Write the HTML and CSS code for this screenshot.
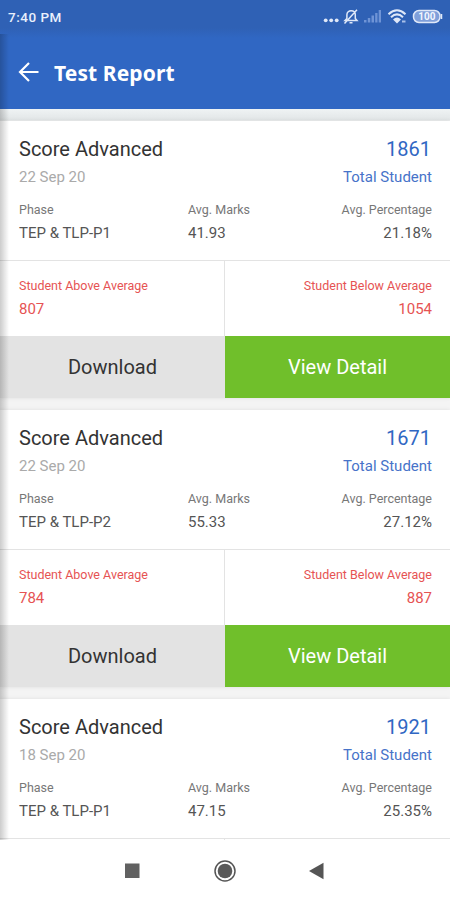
FILE: index.html
```
<!DOCTYPE html>
<html lang="en">
<head>
    <meta charset="UTF-8">
    <title>Test Report</title>
    <link rel="stylesheet" href="styles.css">
</head>
<body>
<div id="screen">
    <div id="header">
        <div class="status">
            <span class="time">7:40 PM</span>
            <svg class="status-icons" width="122" height="18" viewBox="0 0 122 18">
                <g fill="#dfe8f8">
                    <circle cx="3.700" cy="12.300" r="1.900"/>
                    <circle cx="9.200" cy="12.300" r="1.900"/>
                    <circle cx="14.700" cy="12.300" r="1.900"/>
                </g>
                <g fill="none" stroke="#dfe8f8" stroke-width="1.500">
                    <path d="M23 12.500h12l-1.700-2V6.800c0-5.500-8.400-5.500-8.400 0v3.700zM27.500 14.700h3M22.500 15.500L35 1.800"/>
                </g>
                <g fill="#6f94d6">
                    <rect x="42" y="12" width="2.500" height="2.500"/>
                    <rect x="45.800" y="10" width="2.500" height="4.500"/>
                    <rect x="49.500" y="7.500" width="2.500" height="7"/>
                    <rect x="53.200" y="5" width="2.300" height="9.500"/>
                    <rect x="56.700" y="2" width="2.300" height="12.500"/>
                </g>
                <g fill="none" stroke="#dfe8f8" stroke-width="2">
                    <path d="M66.500 6.200Q75 -1.600 83.500 6.200M69 9.200Q75 3.600 81 9.200"/>
                    <path d="M71 11.400Q75 7.600 79 11.400L75 15.500z" fill="#dfe8f8" stroke="none"/>
                    <path d="M80 13.500h3.500" stroke="#a9c0e8"/>
                </g>
                <rect x="91.500" y="2.500" width="26.500" height="12" rx="5.500" fill="#7f9fda" stroke="#dfe8f8" stroke-width="1.500"/>
                <path d="M119.500 6v5" stroke="#dfe8f8" stroke-width="1.500"/>
                <text class="battery" x="104.800" y="12.200" text-anchor="middle">100</text>
            </svg>
        </div>
        <div class="toolbar">
            <svg width="22" height="22" viewBox="0 0 22 22">
                <path d="M21.500 10H3M12 1L3 10l9 9" fill="none" stroke="#fff" stroke-width="2.200"/>
            </svg>
            <h1>Test Report</h1>
        </div>
    </div>

    <div id="list">
        <div class="card">
            <div class="info">
                <div class="row title"><span>Score Advanced</span><span class="total">1861</span></div>
                <div class="row date"><span>22 Sep 20</span><span class="student">Total Student</span></div>
                <div class="row label"><span>Phase</span><span>Avg. Marks</span><span>Avg. Percentage</span></div>
                <div class="row value"><span>TEP &amp; TLP-P1</span><span>41.93</span><span>21.18%</span></div>
            </div>
            <div class="average">
                <div><p class="name">Student Above Average</p><p class="num">807</p></div>
                <div><p class="name">Student Below Average</p><p class="num">1054</p></div>
            </div>
            <div class="buttons"><span class="download">Download</span><span class="detail">View Detail</span></div>
        </div>

        <div class="card">
            <div class="info">
                <div class="row title"><span>Score Advanced</span><span class="total">1671</span></div>
                <div class="row date"><span>22 Sep 20</span><span class="student">Total Student</span></div>
                <div class="row label"><span>Phase</span><span>Avg. Marks</span><span>Avg. Percentage</span></div>
                <div class="row value"><span>TEP &amp; TLP-P2</span><span>55.33</span><span>27.12%</span></div>
            </div>
            <div class="average">
                <div><p class="name">Student Above Average</p><p class="num">784</p></div>
                <div><p class="name">Student Below Average</p><p class="num">887</p></div>
            </div>
            <div class="buttons"><span class="download">Download</span><span class="detail">View Detail</span></div>
        </div>

        <!-- runs under the navigation bar -->
        <div class="card">
            <div class="info">
                <div class="row title"><span>Score Advanced</span><span class="total">1921</span></div>
                <div class="row date"><span>18 Sep 20</span><span class="student">Total Student</span></div>
                <div class="row label"><span>Phase</span><span>Avg. Marks</span><span>Avg. Percentage</span></div>
                <div class="row value"><span>TEP &amp; TLP-P1</span><span>47.15</span><span>25.35%</span></div>
            </div>
            <div class="average"><div></div><div></div></div>
        </div>
    </div>

    <div id="nav">
        <svg width="24" height="24" viewBox="0 0 24 24"><rect x="4" y="4.500" width="14.500" height="14.500" fill="#616161"/></svg>
        <svg width="24" height="24" viewBox="0 0 24 24">
            <circle cx="12" cy="12" r="10" fill="none" stroke="#555" stroke-width="1.500"/>
            <circle cx="12" cy="12" r="7.300" fill="#5a5a5a"/>
        </svg>
        <svg width="24" height="24" viewBox="0 0 24 24"><path d="M4 12L18.500 3.800v16.400z" fill="#555"/></svg>
    </div>
    <div id="shade"></div>
</div>
</body>
</html>
```
FILE: styles.css
```
* {
    padding: 0;
    margin: 0;
    box-sizing: border-box;
}

body {
    font-family: Roboto, "Liberation Sans", sans-serif;
    background: #ffffff;
}

#screen {
    width: 450px;
    height: 900px;
    overflow: hidden;
    position: relative;
    display: flex;
    flex-direction: column;
}

#header {
    height: 109px;
    flex: none;
    background: linear-gradient(#2f61b5 0, #2f61b5 28px, #3067c3 38px);
    color: white;
}

.status {
    height: 33px;
    padding: 0 6px 0 8px;
    display: flex;
    justify-content: space-between;
    align-items: center;
}

.time {
    font-size: 13.5px;
    font-weight: 500;
    letter-spacing: 0.5px;
    color: #e9f0fc;
}

.battery {
    font-size: 10px;
    font-weight: 700;
    fill: #f2f6fe;
}

.toolbar {
    height: 80px;
    padding-left: 17px;
    display: flex;
    align-items: center;
    gap: 15px;
}

.toolbar h1 {
    font: bold 21px/28px "Noto Sans", sans-serif;
    letter-spacing: 0.1px;
}

#list {
    height: 731px;
    flex: none;
    overflow: hidden;
    padding-top: 12px;
    background: linear-gradient(#eff3f4 0, #e2e6e7 11px, #f4f4f4 12px);
}

.card {
    height: 277px;
    margin-bottom: 12px;
    background: #ffffff;
    box-shadow: 0 0 4px rgba(0, 0, 0, 0.09);
}

.info {
    height: 140px;
    padding: 14px 18px 0 19px;
    border-bottom: 1px solid #e3e3e3;
}

.row {
    display: flex;
    justify-content: space-between;
}

.title {
    font-size: 20px;
    line-height: 28px;
    color: #333333;
}

.total {
    color: #3067c3;
    padding-right: 1px;
}

.date {
    margin-top: 1px;
    font-size: 15px;
    line-height: 26px;
    color: #aaaaaa;
}

.student {
    color: #4773c9;
}

.label, .value {
    display: grid;
    grid-template-columns: 169px 1fr auto;
}

.label {
    margin-top: 8px;
    font-size: 12.5px;
    line-height: 23px;
    color: #777777;
}

.value {
    font-size: 15px;
    line-height: 24px;
    color: #555555;
}

.average {
    height: 75px;
    display: flex;
    color: #e65353;
}

.average div {
    width: 50%;
    padding: 13px 18px 0 19px;
}

.average div:first-child {
    border-right: 1px solid #e3e3e3;
}

.average div:last-child {
    text-align: right;
}

.name {
    font-size: 12.5px;
    line-height: 23px;
}

.num {
    font-size: 15px;
    line-height: 24px;
}

.buttons {
    height: 62px;
    display: flex;
    font-size: 20px;
    line-height: 62px;
    text-align: center;
}

.buttons span {
    width: 50%;
}

.download {
    background: #e3e3e3;
    color: #333333;
}

.detail {
    background: #70bf2b;
    color: #ffffff;
}

#nav {
    height: 60px;
    padding-top: 2px;
    flex: none;
    background: #ffffff;
    display: flex;
    justify-content: center;
    align-items: center;
    gap: 68px;
}

/* soft shadow along the left edge */
#shade {
    position: absolute;
    left: 0;
    top: 34px;
    width: 9px;
    height: 806px;
    background: linear-gradient(90deg, rgba(0, 0, 0, 0.2), rgba(0, 0, 0, 0));
}
```
